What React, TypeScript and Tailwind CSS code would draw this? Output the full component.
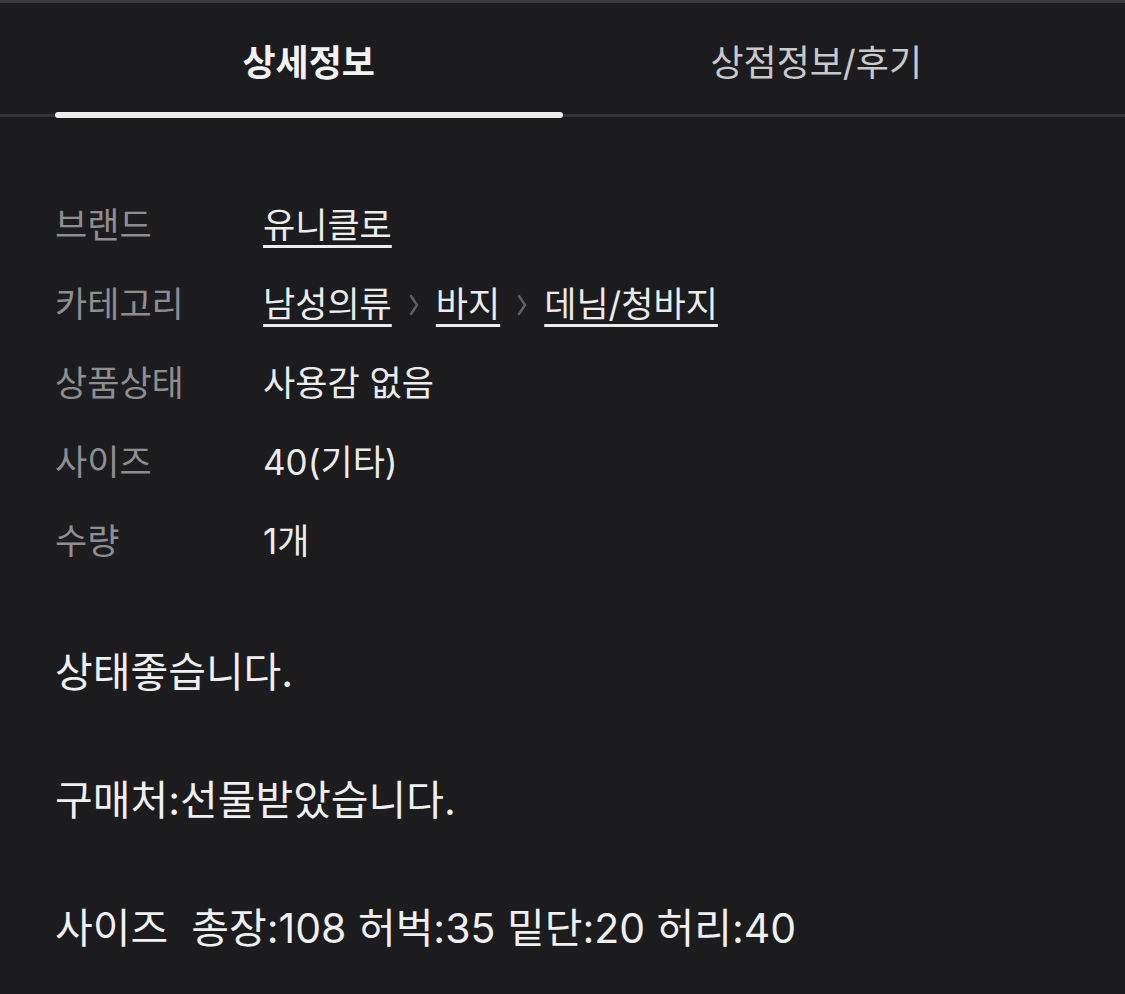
const FONT = "font-['Inter','Noto_Sans_CJK_KR',sans-serif]";

const Chevron = () => (
  <svg width="12" height="28" viewBox="0 0 12 28" className="mx-[16px] shrink-0">
    <path d="M3 5 L9 14 L3 23" fill="none" stroke="#5f5f62" strokeWidth="2.5" strokeLinecap="round" strokeLinejoin="round" />
  </svg>
);

const Link = ({ children }: { children: React.ReactNode }) => (
  <span className="underline decoration-[2.5px] underline-offset-[7px]">{children}</span>
);

const rows: { label: string; value: React.ReactNode }[] = [
  { label: "브랜드", value: <Link>유니클로</Link> },
  {
    label: "카테고리",
    value: (
      <span className="flex items-center">
        <Link>남성의류</Link>
        <Chevron />
        <Link>바지</Link>
        <Chevron />
        <Link>데님/청바지</Link>
      </span>
    ),
  },
  { label: "상품상태", value: "사용감 없음" },
  { label: "사이즈", value: "40(기타)" },
  { label: "수량", value: "1개" },
];

export default function App() {
  return (
    <div className={`${FONT} h-[994px] w-[1125px] overflow-hidden border-t-[3px] border-[#38383a] bg-[#1c1c1e]`}>
      {/* 탭 */}
      <div className="flex h-[114px] border-b-[3px] border-[#333335] px-[55px]">
        <div className="relative flex flex-1 items-center justify-center pt-[8px] text-[36px] font-bold text-[#f2f2f2]">
          상세정보
          <span className="absolute bottom-[-4px] left-0 right-0 h-[6px] rounded-full bg-[#ededed]" />
        </div>
        <div className="flex flex-1 items-center justify-center pt-[8px] text-[36px] text-[#c9c9cb]">
          상점정보/후기
        </div>
      </div>

      {/* 정보 */}
      <div className="flex flex-col px-[55px] pt-[69px]">
        {rows.map((row) => (
          <div key={row.label} className="flex h-[79px] items-center text-[35px]">
            <span className="w-[208px] text-[#8e8e92]">{row.label}</span>
            <span className="text-[#ececec]">{row.value}</span>
          </div>
        ))}
      </div>

      {/* 설명 */}
      <p className="mt-[59px] whitespace-pre-wrap px-[55px] text-[41px] leading-[64px] text-[#f0f0f0]">
        {"상태좋습니다.\n\n구매처:선물받았습니다.\n\n사이즈  총장:108 허벅:35 밑단:20 허리:40"}
      </p>
    </div>
  );
}
